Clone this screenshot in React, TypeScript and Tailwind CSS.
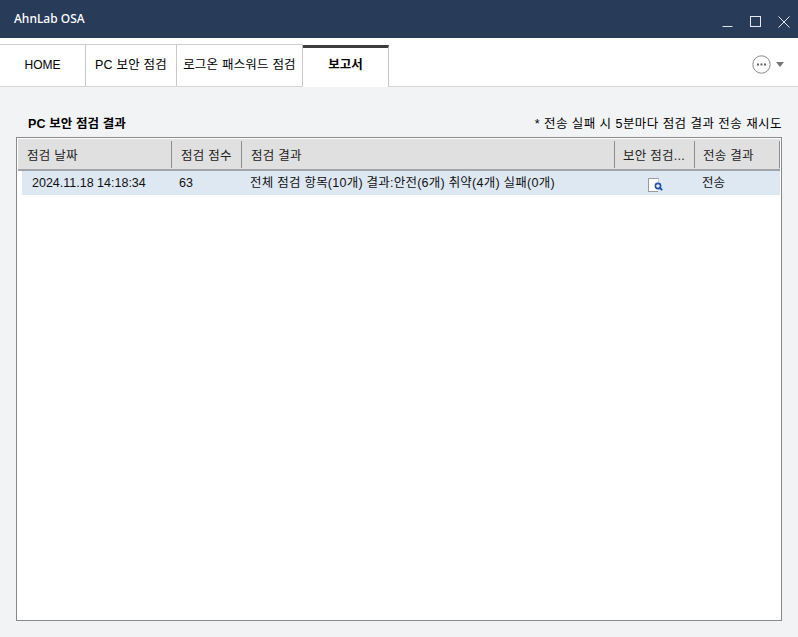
import React from "react";

const cols = [
  { w: "w-[154px]", label: "점검 날짜", pl: "pl-[9px]" },
  { w: "w-[70px]", label: "점검 점수", pl: "pl-[9px]" },
  { w: "w-[373px]", label: "점검 결과", pl: "pl-[9px]" },
  { w: "w-[80px]", label: "보안 점검...", pl: "pl-[8px]" },
  { w: "w-[85px]", label: "전송 결과", pl: "pl-[8px]" },
];

function Tab({ w, label, active, cls }: { w: string; label: string; active?: boolean; cls?: string }) {
  return (
    <div
      className={`${w} ${cls ?? ""} h-[42px] box-border flex items-center justify-center border-r border-[#c8c8c8] text-black ${
        active ? "border-t-[3px] border-t-[#3d3d3d] bg-white font-bold -mb-px relative pb-[4px]" : "border-t border-t-[#d0d0d0] pb-[1px]"
      }`}
    >
      {label}
    </div>
  );
}

export default function App() {
  return (
    <div className="w-[798px] h-[637px] flex flex-col bg-[#f2f3f5] overflow-hidden font-['Liberation_Sans','Noto_Sans_CJK_KR',sans-serif] text-[12.5px] text-[#111]">
      <div className="h-[38px] shrink-0 bg-[#283b59] flex items-center justify-between pl-[14px] pr-[8px]">
        <span className="text-white text-[12px] font-['Noto_Sans','Noto_Sans_CJK_KR',sans-serif] font-medium">AhnLab OSA</span>
        <div className="flex items-center gap-[17px] mt-[5px]">
          <svg width="11" height="11" viewBox="0 0 11 11"><path d="M0.5 10.5H10.5" stroke="#dfe4ea" strokeWidth="1" /></svg>
          <svg width="11" height="11" viewBox="0 0 11 11"><rect x="0.5" y="0.5" width="10" height="10" fill="none" stroke="#e6e9ee" strokeWidth="1" /></svg>
          <svg width="12" height="12" viewBox="0 0 12 12"><path d="M0.5 0.5L11.5 11.5M11.5 0.5L0.5 11.5" stroke="#e6e9ee" strokeWidth="1" /></svg>
        </div>
      </div>

      <div className="h-[49px] shrink-0 bg-white border-b border-[#d4d5d7] flex items-end justify-between pr-[14px]">
        <div className="flex items-end">
          <Tab w="w-[86px]" label="HOME" cls="text-[12px]" />
          <Tab w="w-[91px]" label="PC 보안 점검" cls="tracking-[0.2px]" />
          <Tab w="w-[126px]" label="로그온 패스워드 점검" cls="tracking-[0.2px]" />
          <Tab w="w-[86px]" label="보고서" active />
        </div>
        <div className="flex items-center gap-[5px] mb-[12px]">
          <svg width="19" height="19" viewBox="0 0 19 19">
            <circle cx="9.5" cy="9.5" r="8.7" fill="none" stroke="#8a8a8a" strokeWidth="1" />
            <rect x="5" y="8.5" width="2" height="2" fill="#666" />
            <rect x="8.5" y="8.5" width="2" height="2" fill="#666" />
            <rect x="12" y="8.5" width="2" height="2" fill="#666" />
          </svg>
          <svg width="8" height="5" viewBox="0 0 8 5"><path d="M0 0H8L4 5Z" fill="#777" /></svg>
        </div>
      </div>

      <div className="flex-1 flex flex-col px-[16px] pt-[28px] pb-[16px] min-h-0">
        <div className="flex justify-between items-center h-[18px] pl-[12px] mb-[4px]">
          <span className="font-bold text-black tracking-[0.1px]">PC 보안 점검 결과</span>
          <span className="text-black tracking-[0.45px]">* 전송 실패 시 5분마다 점검 결과 전송 재시도</span>
        </div>
        <div className="flex-1 border border-[#87898c] bg-white flex flex-col min-h-0 w-[766px]">
          <div className="mx-px mt-px h-[32px] shrink-0 bg-[#e0e0e0] border-b-2 border-[#a3a5a8] flex items-start pt-[2px]">
            {cols.map((c) => (
              <div key={c.label} className={`${c.w} ${c.pl} flex items-center h-[27px] pt-[4px] border-r border-[#8c8c8c] text-[#222] tracking-[0.25px] box-border whitespace-nowrap`}>
                {c.label}
              </div>
            ))}
          </div>
          <div className="ml-[5px] mr-px h-[24px] shrink-0 bg-[#dee8f3] flex items-center text-[#111]">
            <div className="w-[149px] pl-[10px]">2024.11.18 14:18:34</div>
            <div className="w-[70px] pl-[8px]">63</div>
            <div className="w-[373px] pl-[9px] whitespace-nowrap tracking-[0.24px]">전체 점검 항목(10개) 결과:안전(6개) 취약(4개) 실패(0개)</div>
            <div className="w-[80px] pl-[34px] pt-[3px]">
              <svg width="16" height="14" viewBox="0 0 16 14">
                <rect x="0.5" y="0.5" width="10" height="13" fill="#fff" stroke="#9a9a9a" strokeWidth="1" />
                <path d="M10.5 0.5V4" stroke="#c8c8c8" strokeWidth="1" />
                <rect x="10" y="4" width="2" height="10" fill="#dee8f3" />
                <circle cx="10" cy="8" r="2.6" fill="none" stroke="#1f4fa8" strokeWidth="1.6" />
                <path d="M12 10L14.2 12.2" stroke="#1f4fa8" strokeWidth="1.8" />
              </svg>
            </div>
            <div className="pl-[8px]">전송</div>
          </div>
        </div>
      </div>
    </div>
  );
}
